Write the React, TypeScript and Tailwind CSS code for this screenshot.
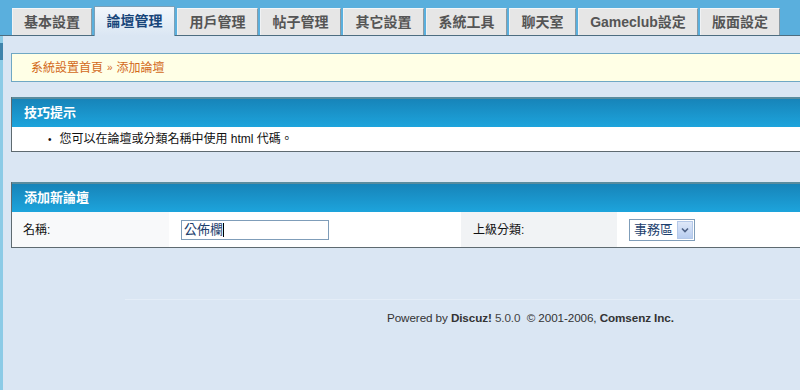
import React from 'react';

const tabs = [
  { label: '基本設置', w: 'w-[80px]' },
  { label: '論壇管理', w: 'w-[81px]', active: true },
  { label: '用戶管理', w: 'w-[81px]' },
  { label: '帖子管理', w: 'w-[81px]' },
  { label: '其它設置', w: 'w-[81px]' },
  { label: '系統工具', w: 'w-[81px]' },
  { label: '聊天室', w: 'w-[67px]' },
  { label: 'Gameclub設定', w: 'w-[120px]' },
  { label: '版面設定', w: 'w-[80px]' },
];

const cjk = "font-['Liberation_Sans','Noto_Sans_CJK_TC',sans-serif]";

const TableHeader: React.FC<{ title: string }> = ({ title }) => (
  <div className="h-[30px] border-t-2 border-[#5a8c9e] bg-gradient-to-b from-[#1784b9] to-[#1da4dc] flex items-center pl-[12px]">
    <span className="text-white text-[13px] font-bold">{title}</span>
  </div>
);

const App: React.FC = () => {
  return (
    <div className={`w-[800px] h-[390px] overflow-hidden bg-[#dae6f3] ${cjk}`}>
      {/* tab bar */}
      <div className="h-[36px] bg-[#5aafdd] border-b border-[#4d6d80] flex items-end pl-[12px] gap-[2px]">
        {tabs.map((t) =>
          t.active ? (
            <div
              key={t.label}
              className={`${t.w} h-[30px] -mb-px border border-b-0 border-[#7aa0b8] bg-gradient-to-b from-[#f2f7fc] to-[#dae6f3] flex items-center justify-center text-[14px] font-bold text-[#17457a]`}
            >
              {t.label}
            </div>
          ) : (
            <div
              key={t.label}
              className={`${t.w} h-[27px] border border-b-0 border-t-[#f4f6f8] border-l-[#f0f2f4] border-r-[#8a9aa4] bg-[#e6e6e6] flex items-center justify-center text-[14px] font-bold text-[#555]`}
            >
              {t.label}
            </div>
          )
        )}
      </div>

      <div className="flex h-[354px]">
        {/* left strip */}
        <div className="w-[3px] bg-[#8ccbe6] flex flex-col">
          <div className="h-[7px]" />
          <div className="h-[17px] bg-[#3f84ab]" />
        </div>

        <div className="flex-1 pl-[8px]">
          {/* breadcrumb */}
          <div className="mt-[17px] h-[29px] border border-r-0 border-[#6fa8c4] bg-[#ffffe6] flex items-center pl-[19px] text-[12px] text-[#d2691a]">
            系統設置首頁 <span className="mx-[4px] text-[10px]">»</span> 添加論壇
          </div>

          {/* tips */}
          <div className="mt-[15px] border-l border-b border-[#5e6a70]">
            <TableHeader title="技巧提示" />
            <div className="h-[24px] bg-white flex items-center pl-[36px] text-[12px] text-[#111]">
              <span className="mr-[8px] text-[10px]">•</span>
              您可以在論壇或分類名稱中使用 html 代碼。
            </div>
          </div>

          {/* add forum */}
          <div className="mt-[30px] border-l border-b border-[#5e6a70]">
            <TableHeader title="添加新論壇" />
            <div className="h-[35px] flex text-[12px] text-[#111]">
              <div className="w-[157px] bg-[#f8f9fa] flex items-center pl-[11px]">名稱:</div>
              <div className="w-[292px] bg-white flex items-center pl-[12px]">
                <div className="w-[148px] h-[20px] border border-[#7f9db9] bg-white flex items-center pl-[2px] text-[13px] text-[#1d3f6e]">
                  公佈欄<span className="w-px h-[14px] bg-black" />
                </div>
              </div>
              <div className="w-[156px] bg-[#f1f3f5] flex items-center pl-[12px]">上級分類:</div>
              <div className="flex-1 bg-white flex items-center pl-[12px]">
                <div className="w-[66px] h-[22px] border border-[#7f9db9] bg-white flex items-center">
                  <span className="flex-1 pl-[4px] text-[13px] text-[#1d3f6e]">事務區</span>
                  <span className="w-[16px] h-[18px] mr-px bg-gradient-to-b from-[#dfe8f8] to-[#b8cdf0] border border-[#b4c8e8] flex items-center justify-center">
                    <svg width="8" height="6" viewBox="0 0 8 6">
                      <path d="M1 1.5 L4 4.5 L7 1.5" stroke="#4d6185" strokeWidth="1.6" fill="none" />
                    </svg>
                  </span>
                </div>
              </div>
            </div>
          </div>

          {/* footer */}
          <div className="mt-[51px] ml-[114px] border-t border-[#e4edf7] pt-[9px] pl-[262px] text-[11.7px] tracking-[-0.1px] text-[#333] font-['Liberation_Sans',sans-serif]">
            Powered by <b>Discuz!</b> <span className="text-[#444]">5.0.0</span>&nbsp; © 2001-2006, <b>Comsenz Inc.</b>
          </div>
        </div>
      </div>
    </div>
  );
};

export default App;
